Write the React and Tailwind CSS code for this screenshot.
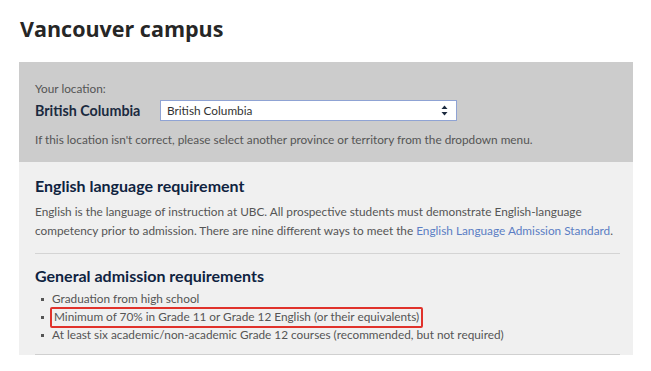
export default function App() {
  const bullets = [
    'Graduation from high school',
    'Minimum of 70% in Grade 11 or Grade 12 English (or their equivalents)',
    'At least six academic/non-academic Grade 12 courses (recommended, but not required)',
  ];

  return (
    <div className="w-[651px] h-[371px] overflow-hidden bg-white font-['Lato',sans-serif]">
      <h1 className="pl-[20px] pt-[17px] text-[21.5px] leading-[24px] font-bold text-[#262626] font-['Open_Sans',sans-serif]">
        Vancouver campus
      </h1>

      <div className="ml-[19px] mt-[21px] w-[614px]">
        {/* Location box */}
        <div className="bg-[#cccccc] h-[100px] pl-[16px] pt-[19px]">
          <p className="text-[11.8px] leading-[16px] text-[#555]">Your location:</p>
          <div className="flex items-center mt-[3px]">
            <span className="w-[125px] text-[14.3px] font-bold text-[#1b2a3f]">British Columbia</span>
            <div className="w-[297px] h-[21px] bg-white border border-[#8fa3d4] flex items-center justify-between pl-[6px] pr-[8px]">
              <span className="text-[11.8px] text-[#333]">British Columbia</span>
              <svg width="7" height="11" viewBox="0 0 7 11">
                <path d="M3.5 0.5 L6.5 4 L0.5 4 Z" fill="#1b2a3f" />
                <path d="M3.5 10.5 L6.5 7 L0.5 7 Z" fill="#1b2a3f" />
              </svg>
            </div>
          </div>
          <p className="mt-[11px] text-[11.8px] leading-[16px] text-[#555]">
            If this location isn't correct, please select another province or territory from the dropdown menu.
          </p>
        </div>

        {/* Requirements */}
        <div className="bg-[#f0f0f0] pl-[16px] pr-[13px] pt-[14px]">
          <h2 className="text-[16px] leading-[20px] font-bold text-[#0f2340]">English language requirement</h2>
          <div className="mt-[6px] pb-[13px] border-b border-[#d4d4d4]">
            <p className="whitespace-nowrap text-[11.8px] leading-[19px] text-[#555]">
              English is the language of instruction at UBC. All prospective students must demonstrate English-language
              <br />
              competency prior to admission. There are nine different ways to meet the{' '}
              <span className="text-[#5b7ec4]">English Language Admission Standard</span>.
            </p>
          </div>

          <h2 className="mt-[12px] text-[16px] leading-[20px] font-bold text-[#0f2340]">General admission requirements</h2>
          <ul className="mt-[4px] pb-[10px] border-b border-[#d0d0d0]">
            {bullets.map((b, i) => (
              <li key={i} className="flex items-center h-[18px] text-[11.8px] text-[#555]">
                <span className="ml-[6px] w-[3px] h-[3px] bg-[#555] shrink-0" />
                {i === 1 ? (
                  <span className="ml-[6px] px-[2px] h-[21px] flex items-center border-2 border-[#e0322b] rounded-[2px]">
                    {b}
                  </span>
                ) : (
                  <span className="ml-[8px]">{b}</span>
                )}
              </li>
            ))}
          </ul>
        </div>
      </div>
    </div>
  );
}
